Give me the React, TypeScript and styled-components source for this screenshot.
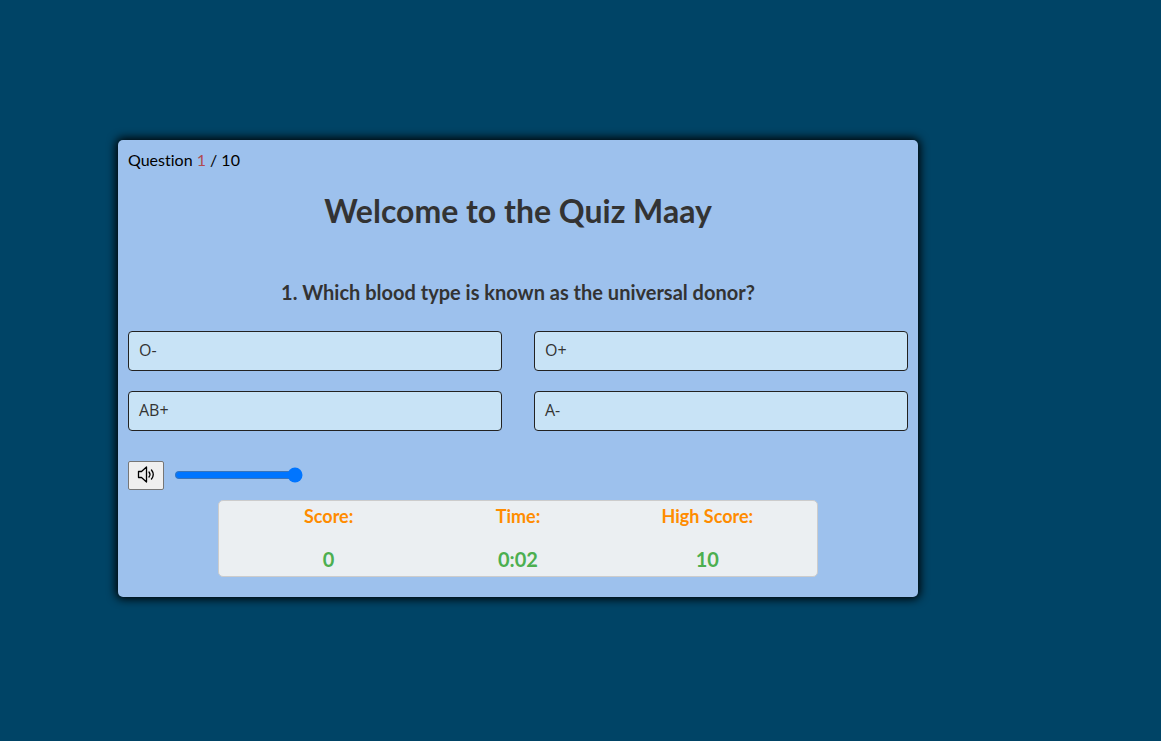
import React, { useState } from "react";
import styled, { createGlobalStyle } from "styled-components";

const GlobalStyle = createGlobalStyle`
  *, *::before, *::after { box-sizing: border-box; }
  body {
    margin: 0;
    background: #004466;
    color: #333;
    font-family: Lato, "Liberation Sans", sans-serif;
    font-size: 16px;
    font-variant-ligatures: none;
  }
`;

const Page = styled.main`
  min-height: 100vh;
  padding: 140px 10% 40px 118px;
`;

const Card = styled.section`
  max-width: 800px;
  padding: 10px 10px 20px;
  border-radius: 5px;
  background: #9dc1ed;
  box-shadow: 0 0 10px 2px #000;
`;

const Progress = styled.div`
  line-height: 20px;
  color: #000;
`;

const Current = styled.span`
  color: #b04a50;
`;

const Title = styled.h1`
  margin: 20px 0 0;
  font-size: 32px;
  line-height: 42px;
  font-weight: 700;
  text-align: center;
`;

const Question = styled.h2`
  margin: 48px 0 0;
  font-size: 20px;
  line-height: 24px;
  font-weight: 700;
  text-align: center;
`;

const Options = styled.div`
  display: grid;
  grid-template-columns: 1fr 1fr;
  gap: 20px 32px;
  margin-top: 27px;
`;

const Option = styled.button`
  height: 40px;
  padding: 0 10px 2px;
  border: 1px solid #222;
  border-radius: 4px;
  background: #c8e3f6;
  color: #333;
  font: 400 16px/20px "Open Sans", sans-serif;
  text-align: left;
  cursor: pointer;
`;

const Sound = styled.div`
  display: flex;
  align-items: flex-start;
  gap: 8px;
  margin-top: 30px;
`;

const MuteButton = styled.button`
  display: flex;
  align-items: center;
  justify-content: center;
  width: 36px;
  height: 29px;
  padding: 0 0 2px;
  border: 1px solid #767676;
  border-radius: 2px;
  background: #efefef;
  color: #000;
`;

const Volume = styled.input`
  width: 129px;
  height: 16px;
  margin: 6px 2px;
  accent-color: #0075ff;
`;

const Stats = styled.dl`
  display: grid;
  grid-template-columns: repeat(3, 1fr);
  max-width: 600px;
  margin: 10px auto 0;
  padding: 4px 15px 5px;
  border: 1px solid #ccc;
  border-radius: 5px;
  background: #ebeff2;
  text-align: center;
  font-weight: 700;
`;

const Label = styled.dt`
  font-size: 18px;
  line-height: 22px;
  color: #ff8c00;
`;

const Value = styled.dd`
  margin: 20px 0 0;
  font-size: 20px;
  line-height: 24px;
  color: #4caf50;
`;

const answers = ["O-", "O+", "AB+", "A-"];
const stats = [
  ["Score:", "0"],
  ["Time:", "0:02"],
  ["High Score:", "10"],
];

export default function App() {
  const [volume, setVolume] = useState(100);
  return (
    <Page>
      <GlobalStyle />
      <Card>
        <Progress>
          Question <Current>1</Current> / 10
        </Progress>
        <Title>Welcome to the Quiz Maay</Title>
        <Question>1. Which blood type is known as the universal donor?</Question>
        <Options>
          {answers.map((a) => (
            <Option key={a} type="button">{a}</Option>
          ))}
        </Options>
        <Sound>
          <MuteButton type="button" aria-label="Mute">
            <svg width="18" height="18" viewBox="0 0 18 18" fill="none" stroke="currentColor" strokeWidth="1.3" strokeLinejoin="round" strokeLinecap="round">
              <path d="M1.5 5.5H4.5L9.5 1V16L4.5 11.5H1.5Z" />
              <path d="M12 6Q14 8.5 12 11" />
              <path d="M14.5 4Q18 8.5 14.5 13" />
            </svg>
          </MuteButton>
          <Volume
            type="range"
            aria-label="Volume"
            min={0}
            max={100}
            value={volume}
            onChange={(e) => setVolume(Number(e.target.value))}
          />
        </Sound>
        <Stats>
          {stats.map(([label, value]) => (
            <div key={label}>
              <Label>{label}</Label>
              <Value>{value}</Value>
            </div>
          ))}
        </Stats>
      </Card>
    </Page>
  );
}
